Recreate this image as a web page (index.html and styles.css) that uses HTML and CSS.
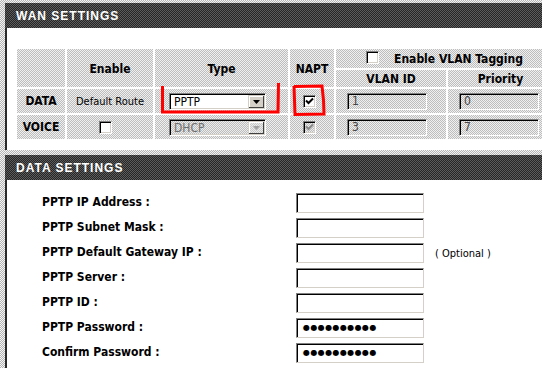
FILE: index.html
```html
<!DOCTYPE html>
<html>
<head>
<meta charset="utf-8">
<link rel="stylesheet" href="styles.css">
</head>
<body>
<div class="page">
  <section class="panel wan-panel">
    <h2 class="panel-head">WAN SETTINGS</h2>
    <div class="wan-body">
      <table class="wan">
        <tr class="r1">
          <td rowspan="2" class="c1"></td>
          <th rowspan="2" class="c2">Enable</th>
          <th rowspan="2" class="c3">Type</th>
          <th rowspan="2" class="c4">NAPT</th>
          <th colspan="2" class="vlan-tag"><span class="cb"></span><span class="vlan-text">Enable VLAN Tagging</span></th>
        </tr>
        <tr class="r2">
          <th class="c5">VLAN ID</th>
          <th class="c6">Priority</th>
        </tr>
        <tr class="r3">
          <th class="rowname">DATA</th>
          <td class="route">Default Route</td>
          <td class="type-cell">
            <div class="select"><span class="select-val">PPTP</span><span class="select-btn"><svg width="7" height="4" viewBox="0 0 7 4"><path d="M0 0H7L3.5 4Z" fill="#000"/></svg></span></div>
          </td>
          <td class="napt"><span class="cb checked"><svg width="9" height="9" viewBox="0 0 9 9"><path d="M1 3.5L3.5 6 8 1.5" stroke="#000" stroke-width="2" fill="none"/></svg></span></td>
          <td class="num-cell"><span class="tbox">1</span></td>
          <td class="num-cell"><span class="tbox">0</span></td>
        </tr>
        <tr class="r4">
          <th class="rowname">VOICE</th>
          <td class="voice-cb"><span class="cb"></span></td>
          <td class="type-cell">
            <div class="select disabled"><span class="select-val">DHCP</span><span class="select-btn"><svg width="7" height="4" viewBox="0 0 7 4"><path d="M0 0H7L3.5 4Z" fill="#a0a0a0"/></svg></span></div>
          </td>
          <td class="napt"><span class="cb checked disabled"><svg width="9" height="9" viewBox="0 0 9 9"><path d="M1 3.5L3.5 6 8 1.5" stroke="#8a8a8a" stroke-width="2" fill="none"/></svg></span></td>
          <td class="num-cell"><span class="tbox">3</span></td>
          <td class="num-cell"><span class="tbox">7</span></td>
        </tr>
      </table>
    </div>
  </section>

  <section class="panel data-panel">
    <h2 class="panel-head">DATA SETTINGS</h2>
    <div class="data-body">
      <label class="lbl">PPTP IP Address :</label><span class="field"></span><span class="note"></span>
      <label class="lbl">PPTP Subnet Mask :</label><span class="field"></span><span class="note"></span>
      <label class="lbl">PPTP Default Gateway IP :</label><span class="field"></span><span class="note">( Optional )</span>
      <label class="lbl">PPTP Server :</label><span class="field"></span><span class="note"></span>
      <label class="lbl">PPTP ID :</label><span class="field"></span><span class="note"></span>
      <label class="lbl">PPTP Password :</label><span class="field pw">●●●●●●●●●●</span><span class="note"></span>
      <label class="lbl">Confirm Password :</label><span class="field pw">●●●●●●●●●●</span><span class="note"></span>
    </div>
  </section>

  <svg class="marks" width="542" height="368" viewBox="0 0 542 368">
    <path d="M162.5 86 L162.5 112 L278 112 L278.5 83" stroke="#ff0000" stroke-width="3" fill="none"/>
    <path d="M294 86.5 L322 86 L323.5 100 L324 114 L295 114.5 L294 86" stroke="#ff0000" stroke-width="3" fill="none"/>
  </svg>
</div>
</body>
</html>
```

FILE: styles.css
```css
html, body {
  margin: 0;
  padding: 0;
}
body {
  width: 542px;
  height: 368px;
  overflow: hidden;
  font-family: "DejaVu Sans Condensed", "Liberation Sans", sans-serif;
  font-size: 11px;
  color: #000;
  background: repeating-conic-gradient(#b4b4b4 0 25%, #f4f4f4 0 50%) 0 0 / 2px 2px;
}
.page {
  position: relative;
  width: 542px;
  height: 368px;
  padding: 3px 0 0 5px;
  box-sizing: border-box;
}
.panel {
  width: 560px;
}
.panel-head {
  margin: 0;
  height: 25px;
  line-height: 26px;
  padding-left: 11px;
  color: #fff;
  font-family: "Liberation Sans", sans-serif;
  font-size: 12px;
  font-weight: bold;
  letter-spacing: 1px;
  background: repeating-conic-gradient(#262626 0 25%, #5c5c5c 0 50%) 0 0 / 2px 2px;
}
.wan-body {
  background: #fff;
  border-left: 2px solid #2a2a2a;
  height: 122px;
  box-sizing: border-box;
  padding: 19px 0 0 8px;
}
.wan {
  border-collapse: separate;
  border-spacing: 2px;
  table-layout: fixed;
}
.wan th, .wan td {
  padding: 0;
  background: repeating-conic-gradient(#bdbdbd 0 25%, #f0f0f0 0 50%) 0 0 / 2px 2px;
  text-align: center;
  vertical-align: middle;
  font-size: 12px;
}
.wan th { font-weight: bold; }
.c1 { width: 48px; }
.c2 { width: 86px; }
.c3 { width: 133px; }
.c4 { width: 44px; }
.c5 { width: 110px; }
.c6 { width: 105px; }
.r1 > * { height: 19px; }
.r2 > * { height: 17px; }
.r3 > * { height: 24px; }
.r4 > * { height: 24px; }
.r1 th { padding-top: 2px; }
.r1 .vlan-tag { padding-top: 0; }
.vlan-tag .cb { margin-right: 15px; vertical-align: -1px; }
.route { font-weight: normal; font-size: 11px !important; }

.cb {
  display: inline-block;
  width: 13px;
  height: 13px;
  box-sizing: border-box;
  background: #fff;
  border-top: 1px solid #808080;
  border-left: 1px solid #808080;
  border-right: 1px solid #fff;
  border-bottom: 1px solid #fff;
  box-shadow: inset 1px 1px 0 #000, inset -1px -1px 0 #d4d0c8;
  position: relative;
  vertical-align: middle;
}
.cb svg {
  position: absolute;
  left: 1px;
  top: 1px;
}
.cb.disabled {
  background: repeating-conic-gradient(#bdbdbd 0 25%, #ececec 0 50%) 0 0 / 2px 2px;
}
.napt {
  text-align: left !important;
  padding-left: 13px !important;
}
.voice-cb {
  text-align: left !important;
  padding-left: 32px !important;
}
.type-cell {
  text-align: left !important;
  padding-left: 14px !important;
}
.select {
  display: flex;
  align-items: stretch;
  width: 97px;
  height: 17px;
  box-sizing: border-box;
  background: #fff;
  border-top: 1px solid #808080;
  border-left: 1px solid #808080;
  border-right: 1px solid #fff;
  border-bottom: 1px solid #fff;
  box-shadow: inset 1px 1px 0 #000, inset -1px -1px 0 #d4d0c8;
  padding: 1px;
}
.select-val {
  flex: 1;
  font-size: 12px;
  line-height: 15px;
  padding-left: 3px;
  text-align: left;
  font-weight: normal;
}
.select-btn {
  width: 16px;
  display: flex;
  align-items: center;
  justify-content: center;
  background: #d4d0c8;
  box-sizing: border-box;
  border-top: 1px solid #d4d0c8;
  border-left: 1px solid #d4d0c8;
  box-shadow: inset -1px -1px 0 #404040, inset 1px 1px 0 #fff;
}
.select.disabled {
  background: repeating-conic-gradient(#bdbdbd 0 25%, #ececec 0 50%) 0 0 / 2px 2px;
}
.select.disabled .select-val { color: #6e6e6e; }
.select.disabled .select-btn {
  background: repeating-conic-gradient(#c8c8c8 0 25%, #ececec 0 50%) 0 0 / 2px 2px;
}
.num-cell {
  text-align: left !important;
  padding-left: 11px !important;
}
.tbox {
  display: block;
  width: 80px;
  height: 17px;
  box-sizing: border-box;
  border-top: 1px solid #808080;
  border-left: 1px solid #808080;
  border-right: 1px solid #fff;
  border-bottom: 1px solid #fff;
  box-shadow: inset 1px 1px 0 #000;
  padding-left: 4px;
  line-height: 15px;
  font-size: 12px;
  color: #444;
  text-align: left;
  font-weight: normal;
}

.data-panel {
  margin-top: 5px;
}
.data-body {
  background: #fff;
  border-left: 2px solid #2a2a2a;
  height: 200px;
  box-sizing: border-box;
  padding: 13px 0 0 35px;
  display: grid;
  grid-template-columns: 254px 128px auto;
  grid-auto-rows: 20px;
  row-gap: 5px;
  align-items: center;
}
.lbl {
  font-weight: bold;
  font-size: 12px;
  align-self: center;
  margin-top: -3px;
}
.field {
  display: block;
  height: 20px;
  box-sizing: border-box;
  background: #fff;
  border-top: 1px solid #808080;
  border-left: 1px solid #808080;
  border-right: 1px solid #d4d0c8;
  border-bottom: 1px solid #d4d0c8;
  box-shadow: inset 1px 1px 0 #000;
}
.pw {
  font-family: "DejaVu Sans", sans-serif;
  font-size: 8px;
  letter-spacing: 0.4px;
  line-height: 18px;
  padding-left: 6px;
}
.note {
  padding-left: 11px;
  font-size: 11px;
}
.marks {
  position: absolute;
  left: 0;
  top: 0;
  pointer-events: none;
}
```
